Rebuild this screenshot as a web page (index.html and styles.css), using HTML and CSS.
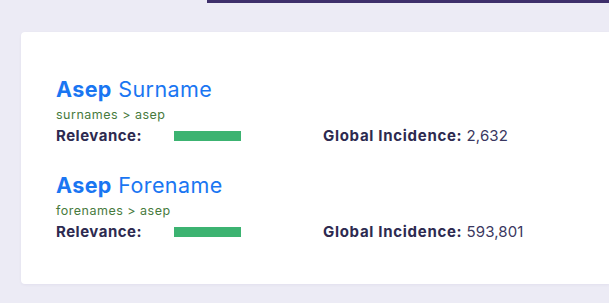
FILE: index.html
```html
<!DOCTYPE html>
<html>
<head>
<meta charset="utf-8">
<link rel="stylesheet" href="styles.css">
</head>
<body>
<div class="topbar"></div>
<div class="card">
  <div class="result">
    <h2 class="title"><b>Asep</b> Surname</h2>
    <div class="crumb">surnames &gt; asep</div>
    <div class="row">
      <span class="label">Relevance:</span>
      <span class="barcell"><span class="bar" style="width:67px"></span></span>
      <span class="inc"><span class="label">Global Incidence:</span> 2,632</span>
    </div>
  </div>
  <div class="result">
    <h2 class="title"><b>Asep</b> Forename</h2>
    <div class="crumb">forenames &gt; asep</div>
    <div class="row">
      <span class="label">Relevance:</span>
      <span class="barcell"><span class="bar" style="width:67px"></span></span>
      <span class="inc"><span class="label">Global Incidence:</span> 593,801</span>
    </div>
  </div>
</div>
</body>
</html>
```
FILE: styles.css
```css
html, body {
  margin: 0;
  padding: 0;
}
body {
  background: #ecebf5;
  font-family: Inter, "Open Sans", sans-serif;
  color: #2d2a50;
  height: 303px;
  overflow: hidden;
}
.topbar {
  margin-left: 207px;
  height: 3px;
  background: #3e2f6b;
}
.card {
  margin: 29px 0 0 21px;
  height: 252px;
  background: #fff;
  border-radius: 4px 0 0 4px;
  box-shadow: 0 1px 3px rgba(60, 50, 120, 0.06);
  padding: 44px 0 0 35px;
  box-sizing: border-box;
  display: flex;
  flex-direction: column;
  gap: 28px;
}
.title {
  margin: 0;
  font-size: 21.5px;
  line-height: 26px;
  font-weight: 400;
  color: #1a76f2;
  letter-spacing: 0.4px;
}
.title b {
  font-weight: 700;
}
.crumb {
  margin-top: 5px;
  font-size: 12.5px;
  line-height: 16px;
  color: #477a3d;
  letter-spacing: 0.5px;
}
.row {
  margin-top: 5px;
  display: grid;
  grid-template-columns: 118px 149px auto;
  align-items: center;
  font-size: 15px;
  line-height: 16px;
  letter-spacing: 0.5px;
}
.label {
  font-weight: 700;
  color: #2d2a50;
}
.barcell {
  display: flex;
  align-items: center;
}
.bar {
  display: block;
  height: 10px;
  background: #3cb371;
}
.inc {
  color: #3a3760;
  letter-spacing: 0.1px;
}
.inc .label {
  letter-spacing: 0.7px;
}
```
